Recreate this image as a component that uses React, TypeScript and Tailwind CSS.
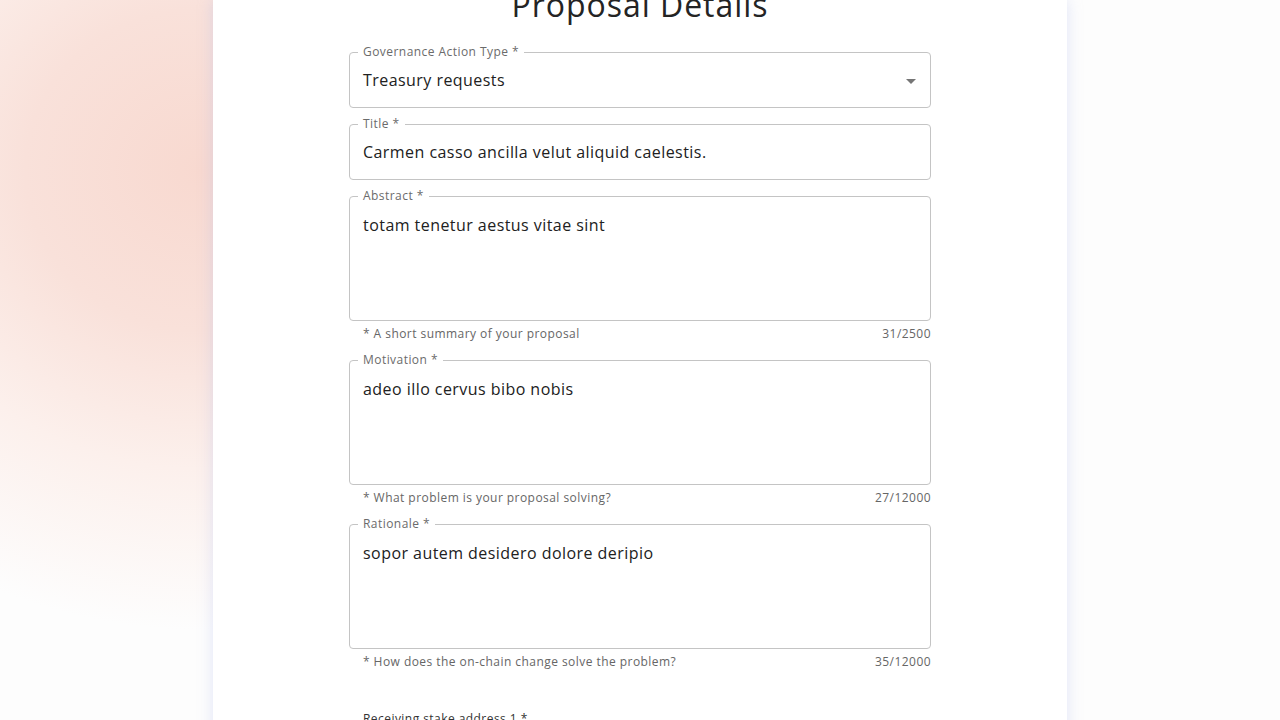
import React from "react";

const font = {
  fontFamily: '"Open Sans", "Liberation Sans", sans-serif',
  letterSpacing: "0.028em",
};

function Outlined({
  label,
  value,
  multiline,
  select,
}: {
  label: string;
  value: string;
  multiline?: boolean;
  select?: boolean;
}) {
  return (
    <div
      className={`relative rounded-[4px] border border-[#c4c4c4] bg-white ${
        multiline ? "h-[125px] pt-[17px]" : "h-[56px] flex items-center"
      } pl-[13px] pr-[14px]`}
    >
      <span className="absolute -top-[10px] left-[8px] bg-white px-[5px] text-[12px] leading-[18px] text-[#6b6b6b]">
        {label}
      </span>
      <div className="text-[16px] leading-[23px] text-[#212121]">{value}</div>
      {select && (
        <svg
          className="absolute right-[7px] top-[16px] h-6 w-6"
          viewBox="0 0 24 24"
          fill="rgba(0,0,0,0.54)"
        >
          <path d="M7 10l5 5 5-5z" />
        </svg>
      )}
    </div>
  );
}

function Helper({ left, right }: { left: string; right: string }) {
  return (
    <div className="mt-[3px] flex justify-between pl-[14px] text-[12px] leading-[20px] text-[#666666]">
      <span>{left}</span>
      <span>{right}</span>
    </div>
  );
}

export default function App() {
  return (
    <div
      className="relative h-[720px] w-full overflow-hidden bg-[#fdfdfd]"
      style={font}
    >
      <div className="absolute inset-0 bg-[radial-gradient(ellipse_500px_460px_at_200px_170px,#f8d9d0_0%,#f9e1da_35%,#fcf0ec_65%,rgba(255,255,255,0)_100%)]" />
      <div className="relative mx-auto flex h-[760px] w-[854px] flex-col bg-white shadow-[0_0_14px_rgba(170,180,235,0.35)]">
        <div className="flex flex-col px-[136px]">
          <h1 className="-mt-[15px] text-center text-[32px] leading-[40px] font-normal tracking-[0.03em] text-[#242424]">
            Proposal Details
          </h1>
          <div className="mt-[27px] flex flex-col">
            <Outlined
              label="Governance Action Type *"
              value="Treasury requests"
              select
            />
            <div className="mt-[16px]">
              <Outlined
                label="Title *"
                value="Carmen casso ancilla velut aliquid caelestis."
              />
            </div>
            <div className="mt-[16px]">
              <Outlined
                label="Abstract *"
                value="totam tenetur aestus vitae sint"
                multiline
              />
              <Helper left="* A short summary of your proposal" right="31/2500" />
            </div>
            <div className="mt-[16px]">
              <Outlined
                label="Motivation *"
                value="adeo illo cervus bibo nobis"
                multiline
              />
              <Helper
                left="* What problem is your proposal solving?"
                right="27/12000"
              />
            </div>
            <div className="mt-[16px]">
              <Outlined
                label="Rationale *"
                value="sopor autem desidero dolore deripio"
                multiline
              />
              <Helper
                left="* How does the on-chain change solve the problem?"
                right="35/12000"
              />
            </div>
            <div className="mt-[39px] pl-[14px] text-[12px] leading-[16px] text-[#333333]">
              Receiving stake address 1 *
            </div>
          </div>
        </div>
      </div>
    </div>
  );
}
